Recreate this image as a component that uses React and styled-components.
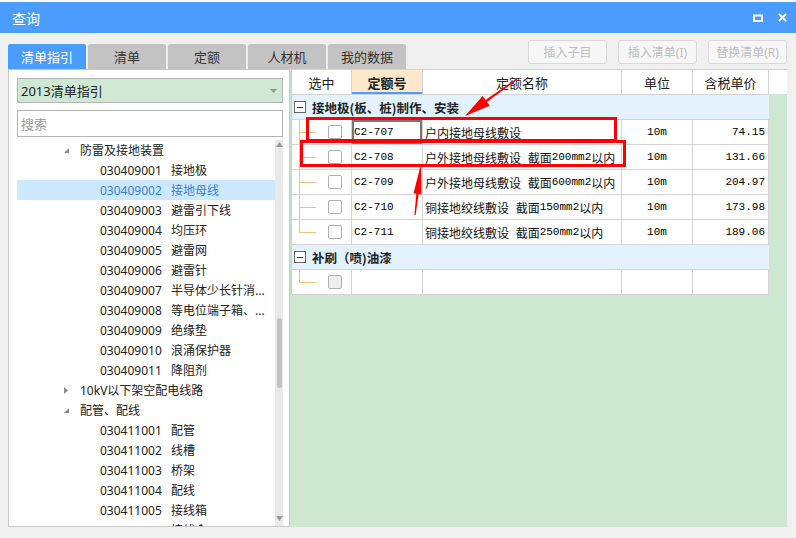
import React from "react";
import styled, { createGlobalStyle } from "styled-components";

const GlobalStyle = createGlobalStyle`
  html, body { margin: 0; padding: 0; }
  body {
    background: #f0f0f0;
    font-family: "Noto Sans", "Noto Sans CJK SC", sans-serif;
  }
`;

const Page = styled.div`
  position: relative;
  width: 796px;
  height: 538px;
  overflow: hidden;
  background: #f0f0f0;
  display: flex;
  flex-direction: column;
`;

const TopStrip = styled.div`
  height: 2px;
  flex-shrink: 0;
  background: #fafafa;
`;

const TitleBar = styled.div`
  height: 31px;
  flex-shrink: 0;
  background: #4a9cff;
  color: #fff;
  display: flex;
  align-items: center;
  justify-content: space-between;
  padding: 0 9px 0 12px;
  font-size: 14px;
`;

const WinControls = styled.div`
  display: flex;
  align-items: center;
  gap: 15px;
`;

const ToolRow = styled.div`
  height: 36px;
  flex-shrink: 0;
  display: flex;
  align-items: flex-start;
  padding: 0 9px 0 8px;
`;

const Tabs = styled.div`
  display: flex;
  gap: 2px;
  margin-top: 11px;
`;

const Tab = styled.div`
  width: 78px;
  height: 25px;
  display: flex;
  align-items: center;
  justify-content: center;
  font-size: 13px;
  border-radius: 2px 2px 0 0;
  background: ${(p) => (p.$active ? "#4a9cff" : "#c3c3c3")};
  color: ${(p) => (p.$active ? "#fff" : "#333")};
`;

const Actions = styled.div`
  display: flex;
  gap: 11px;
  margin-left: auto;
  margin-top: 7px;
`;

const ActionButton = styled.div`
  width: 77px;
  height: 22px;
  border: 1px solid #d9d9d9;
  border-radius: 3px;
  background: #f7f7f7;
  color: #bdbdbd;
  font-size: 12px;
  display: flex;
  align-items: center;
  justify-content: center;
`;

const Main = styled.div`
  height: 458px;
  flex-shrink: 0;
  display: flex;
  padding: 0 9px 0 8px;
`;

const LeftPanel = styled.div`
  width: 282px;
  box-sizing: border-box;
  border: 1px solid #c8c8c8;
  background: #fff;
  padding: 8px 0 0 8px;
  display: flex;
  flex-direction: column;
`;

const SelectBox = styled.div`
  width: 266px;
  height: 25px;
  box-sizing: border-box;
  border: 1px solid #b4b4b4;
  background: #cfe8d3;
  display: flex;
  align-items: center;
  justify-content: space-between;
  padding: 0 5px 0 3px;
  font-size: 13px;
  color: #222;
`;

const SearchBox = styled.div`
  width: 266px;
  height: 27px;
  margin-top: 7px;
  box-sizing: border-box;
  border: 1px solid #b4b4b4;
  display: flex;
  align-items: center;
  padding-left: 3px;
  font-size: 13px;
  color: #9a9a9a;
`;

const TreeArea = styled.div`
  flex: 1;
  display: flex;
  margin-top: 3px;
  overflow: hidden;
`;

const TreeList = styled.div`
  width: 258px;
  overflow: hidden;
`;

const TreeRow = styled.div`
  height: 20px;
  display: flex;
  align-items: center;
  font-size: 12px;
  white-space: nowrap;
  padding-left: ${(p) => (p.$level === 1 ? 46 : 83)}px;
  background: ${(p) => (p.$selected ? "#cce8ff" : "transparent")};
  color: ${(p) => (p.$selected ? "#3a7fd8" : "#222")};
`;

const Toggle = styled.span`
  width: 17px;
  display: flex;
  align-items: center;
`;

const Code = styled.span`
  width: 71px;
`;

const Scrollbar = styled.div`
  position: relative;
  width: 8px;
  background: #e9e9e9;
  display: flex;
  flex-direction: column;
  align-items: center;
  justify-content: space-between;
  padding: 2px 0 5px;
  box-sizing: border-box;
`;

const Thumb = styled.div`
  position: absolute;
  top: 178px;
  left: 2px;
  width: 5px;
  height: 70px;
  border-radius: 3px;
  background: #c2c2c2;
`;

const RightPanel = styled.div`
  flex: 1;
  background: #cde7d0;
  display: flex;
  flex-direction: column;
  padding-left: 1px;
`;

const HeaderBar = styled.div`
  display: flex;
  height: 25px;
  background: #fff;
  border-top: 1px solid #d4d4d4;
  box-sizing: border-box;
`;

const Table = styled.div`
  width: 478px;
  border-left: 1px solid #c8c8c8;
  box-sizing: border-box;
`;

const Row = styled.div`
  display: grid;
  grid-template-columns: 60px 71px 199px 71px 76px;
  height: ${(p) => (p.$head ? 24 : 25)}px;
  box-sizing: border-box;
  border-bottom: ${(p) => (p.$head ? "none" : "1px solid #d4d4d4")};
  background: #fff;
`;

const HeaderCell = styled.div`
  border-right: 1px solid #d4d4d4;
  display: flex;
  align-items: center;
  justify-content: center;
  font-size: 13px;
  color: #222;
  font-weight: ${(p) => (p.$active ? 700 : 400)};
  background: ${(p) => (p.$active ? "#fde8cb" : "#fff")};
  box-shadow: ${(p) => (p.$active ? "inset 0 -2px 0 #4a9cff" : "none")};
`;

const Cell = styled.div`
  position: relative;
  border-right: 1px solid #d4d4d4;
  display: flex;
  align-items: center;
  justify-content: ${(p) => p.$align || "flex-start"};
  padding: 0 ${(p) => (p.$align === "flex-end" ? 3 : 2)}px;
  font-size: 12px;
  color: #111;
  white-space: pre;
  overflow: hidden;
  box-shadow: ${(p) => (p.$focused ? "inset 0 0 0 2px #777" : "none")};
  font-family: "Noto Sans CJK SC", sans-serif;
`;

const Mono = styled.span`
  font-family: "Liberation Mono", monospace;
  font-size: 11px;
  color: #000;
`;

const GroupRow = styled.div`
  height: ${(p) => (p.$first ? 26 : 25)}px;
  box-sizing: border-box;
  border-top: ${(p) => (p.$first ? "1px solid #d4d4d4" : "none")};
  border-bottom: 1px solid #d4d4d4;
  background: #e4f2fd;
  display: flex;
  align-items: center;
  padding-left: 2px;
  font-size: 12.5px;
  font-weight: 700;
  color: #222;
  font-family: "Noto Sans CJK SC", sans-serif;
`;

const Collapse = styled.span`
  width: 10px;
  height: 10px;
  border: 1px solid #666;
  background: #fff;
  margin-right: 6px;
  display: flex;
  align-items: center;
  justify-content: center;
  &::after {
    content: "";
    width: 6px;
    height: 1px;
    background: #333;
  }
`;

const Branch = styled.span`
  position: absolute;
  left: 7px;
  top: 0;
  width: 16px;
  height: ${(p) => (p.$last ? "13px" : "25px")};
  border-left: 1px solid #f3c27a;
  &::after {
    content: "";
    position: absolute;
    left: 0;
    top: 12px;
    width: 16px;
    border-top: 1px solid #f3c27a;
  }
`;

const Check = styled.span`
  position: absolute;
  left: 36px;
  top: 5px;
  width: 12px;
  height: 12px;
  border: 1px solid #b0b0b0;
  border-radius: 2px;
  background: ${(p) => (p.$disabled ? "#eeeeee" : "#fff")};
`;

const Overlay = styled.svg`
  position: absolute;
  left: 0;
  top: 0;
  pointer-events: none;
`;

const tree = [
  { level: 1, open: true, name: "防雷及接地装置" },
  { level: 2, code: "030409001", name: "接地极" },
  { level: 2, code: "030409002", name: "接地母线", selected: true },
  { level: 2, code: "030409003", name: "避雷引下线" },
  { level: 2, code: "030409004", name: "均压环" },
  { level: 2, code: "030409005", name: "避雷网" },
  { level: 2, code: "030409006", name: "避雷针" },
  { level: 2, code: "030409007", name: "半导体少长针消..." },
  { level: 2, code: "030409008", name: "等电位端子箱、..." },
  { level: 2, code: "030409009", name: "绝缘垫" },
  { level: 2, code: "030409010", name: "浪涌保护器" },
  { level: 2, code: "030409011", name: "降阻剂" },
  { level: 1, open: false, name: "10kV以下架空配电线路" },
  { level: 1, open: true, name: "配管、配线" },
  { level: 2, code: "030411001", name: "配管" },
  { level: 2, code: "030411002", name: "线槽" },
  { level: 2, code: "030411003", name: "桥架" },
  { level: 2, code: "030411004", name: "配线" },
  { level: 2, code: "030411005", name: "接线箱" },
  { level: 2, code: "030411006", name: "接线盒" },
];

const quotas = [
  { code: "C2-707", name: "户内接地母线敷设", price: "74.15", focused: true },
  { code: "C2-708", name: "户外接地母线敷设 截面200mm2以内", price: "131.66" },
  { code: "C2-709", name: "户外接地母线敷设 截面600mm2以内", price: "204.97" },
  { code: "C2-710", name: "铜接地绞线敷设 截面150mm2以内", price: "173.98" },
  { code: "C2-711", name: "铜接地绞线敷设 截面250mm2以内", price: "189.06" },
];

// latin runs use the narrow mono face, like the SimSun grid
function mixed(text) {
  return text.split(/([A-Za-z0-9. \-]+)/).map((part, i) =>
    /^[A-Za-z0-9. \-]+$/.test(part) ? <Mono key={i}>{part}</Mono> : part
  );
}

function Arrow({ from, to, head, half }) {
  const dx = to[0] - from[0];
  const dy = to[1] - from[1];
  const len = Math.hypot(dx, dy);
  const ux = dx / len;
  const uy = dy / len;
  const px = -uy;
  const py = ux;
  const bx = to[0] - ux * head;
  const by = to[1] - uy * head;
  const s = 1.2;
  const pts = [
    [from[0] + px * s * 0.5, from[1] + py * s * 0.5],
    [bx + px * s, by + py * s],
    [bx + px * half, by + py * half],
    to,
    [bx - px * half, by - py * half],
    [bx - px * s, by - py * s],
    [from[0] - px * s * 0.5, from[1] - py * s * 0.5],
  ];
  return <polygon points={pts.map((p) => p.join(",")).join(" ")} fill="#ff0000" />;
}

export default function App() {
  return (
    <Page>
      <GlobalStyle />
      <TopStrip />
      <TitleBar>
        <span>查询</span>
        <WinControls>
          <svg width="10" height="8" viewBox="0 0 10 8">
            <rect x="1" y="1.5" width="8" height="5.5" fill="none" stroke="#fff" strokeWidth="2" />
          </svg>
          <svg width="9" height="9" viewBox="0 0 9 9">
            <path d="M1 1 L8 8 M8 1 L1 8" stroke="#fff" strokeWidth="2" />
          </svg>
        </WinControls>
      </TitleBar>

      <ToolRow>
        <Tabs>
          <Tab $active>清单指引</Tab>
          <Tab>清单</Tab>
          <Tab>定额</Tab>
          <Tab>人材机</Tab>
          <Tab>我的数据</Tab>
        </Tabs>
        <Actions>
          <ActionButton>插入子目</ActionButton>
          <ActionButton>插入清单(I)</ActionButton>
          <ActionButton>替换清单(R)</ActionButton>
        </Actions>
      </ToolRow>

      <Main>
        <LeftPanel>
          <SelectBox>
            <span>2013清单指引</span>
            <svg width="7" height="4" viewBox="0 0 7 4">
              <path d="M0 0 H7 L3.5 4 Z" fill="#999" />
            </svg>
          </SelectBox>
          <SearchBox>搜索</SearchBox>
          <TreeArea>
            <TreeList>
              {tree.map((item, i) =>
                item.level === 1 ? (
                  <TreeRow key={i} $level={1}>
                    <Toggle>
                      {item.open ? (
                        <svg width="7" height="7" viewBox="0 0 7 7">
                          <path d="M6 1 V6 H1 Z" fill="#8a8a8a" />
                        </svg>
                      ) : (
                        <svg width="6" height="9" viewBox="0 0 6 9">
                          <path d="M1 1 L5 4.5 L1 8 Z" fill="#8a8a8a" />
                        </svg>
                      )}
                    </Toggle>
                    {item.name}
                  </TreeRow>
                ) : (
                  <TreeRow key={i} $level={2} $selected={item.selected}>
                    <Code>{item.code}</Code>
                    {item.name}
                  </TreeRow>
                )
              )}
            </TreeList>
            <Scrollbar>
              <svg width="7" height="5" viewBox="0 0 7 5">
                <path d="M0 5 L3.5 0 L7 5 Z" fill="#9a9a9a" />
              </svg>
              <Thumb />
              <svg width="7" height="5" viewBox="0 0 7 5">
                <path d="M0 0 L7 0 L3.5 5 Z" fill="#9a9a9a" />
              </svg>
            </Scrollbar>
          </TreeArea>
        </LeftPanel>

        <RightPanel>
          <HeaderBar>
            <Table>
              <Row $head>
                <HeaderCell>选中</HeaderCell>
                <HeaderCell $active>定额号</HeaderCell>
                <HeaderCell>定额名称</HeaderCell>
                <HeaderCell>单位</HeaderCell>
                <HeaderCell>含税单价</HeaderCell>
              </Row>
            </Table>
          </HeaderBar>
          <Table>
            <GroupRow $first>
              <Collapse />
              接地极(板、桩)制作、安装
            </GroupRow>
            {quotas.map((q, i) => (
              <Row key={q.code}>
                <Cell>
                  <Branch $last={i === quotas.length - 1} />
                  <Check />
                </Cell>
                <Cell $focused={q.focused}>
                  <Mono>{q.code}</Mono>
                </Cell>
                <Cell>{mixed(q.name)}</Cell>
                <Cell $align="center">
                  <Mono>10m</Mono>
                </Cell>
                <Cell $align="flex-end">
                  <Mono>{q.price}</Mono>
                </Cell>
              </Row>
            ))}
            <GroupRow>
              <Collapse />
              补刷（喷)油漆
            </GroupRow>
            <Row>
              <Cell>
                <Branch $last />
                <Check $disabled />
              </Cell>
              <Cell />
              <Cell />
              <Cell />
              <Cell />
            </Row>
          </Table>
        </RightPanel>
      </Main>

      <Overlay width="796" height="538" viewBox="0 0 796 538">
        <rect x="307.5" y="118.5" width="308" height="22" fill="none" stroke="#ff0000" strokeWidth="3" />
        <rect x="301.5" y="141.5" width="323" height="24" fill="none" stroke="#ff0000" strokeWidth="3" />
        <Arrow from={[517, 79]} to={[465, 116]} head={26} half={6} />
        <Arrow from={[415, 215]} to={[421, 164]} head={30} half={4} />
      </Overlay>
    </Page>
  );
}
